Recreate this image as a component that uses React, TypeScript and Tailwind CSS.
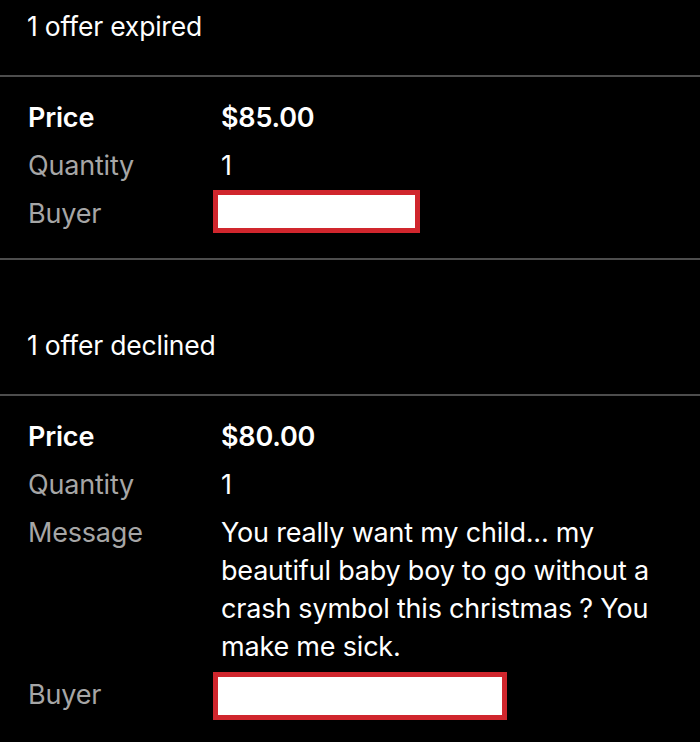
import React from "react";

function Row({ label, bold, children }: { label: string; bold?: boolean; children: React.ReactNode }) {
  return (
    <div className="flex items-start">
      <div className={bold ? "w-[193px] shrink-0 font-semibold text-white" : "w-[193px] shrink-0 text-[#a6a6a6]"}>{label}</div>
      <div className={bold ? "flex-1 font-semibold text-white" : "flex-1 text-white"}>{children}</div>
    </div>
  );
}

export default function App() {
  return (
    <div
      className="w-[700px] h-[742px] overflow-hidden bg-black text-white"
      style={{ fontFamily: "Inter, 'Noto Sans', sans-serif" }}
    >
      <div className="h-[75px] pl-[27px] pt-[10px] text-[26.5px] leading-[32px] tracking-[-0.2px]">1 offer expired</div>
      <div className="h-[2px] bg-[#4d4d4d]" />
      <div className="pl-[28px] pr-[24px] pt-[22px] pb-[25px] flex flex-col gap-[10px] text-[27px] leading-[38px] tracking-[-0.2px]">
        <Row label="Price" bold>$85.00</Row>
        <Row label="Quantity">1</Row>
        <div className="flex items-start">
          <div className="w-[185px] shrink-0 text-[#a6a6a6]">Buyer</div>
          <div className="-mt-[5px] -mb-[5px] w-[207px] h-[43px] border-[5px] border-[#d0262d] bg-white" />
        </div>
      </div>
      <div className="h-[2px] bg-[#4d4d4d]" />
      <div className="h-[134px] pl-[27px] pt-[69px] text-[26.5px] leading-[32px] tracking-[-0.2px]">1 offer declined</div>
      <div className="h-[2px] bg-[#4d4d4d]" />
      <div className="pl-[28px] pr-[24px] pt-[22px] flex flex-col gap-[10px] text-[27px] leading-[38px] tracking-[-0.2px]">
        <Row label="Price" bold>$80.00</Row>
        <Row label="Quantity">1</Row>
        <Row label="Message">
          You really want my child... my beautiful baby boy to go without a crash symbol this christmas ? You make me sick.
        </Row>
        <div className="flex items-start">
          <div className="w-[185px] shrink-0 text-[#a6a6a6]">Buyer</div>
          <div className="-mt-[4px] w-[294px] h-[48px] border-[5px] border-[#d0262d] bg-white" />
        </div>
      </div>
    </div>
  );
}
